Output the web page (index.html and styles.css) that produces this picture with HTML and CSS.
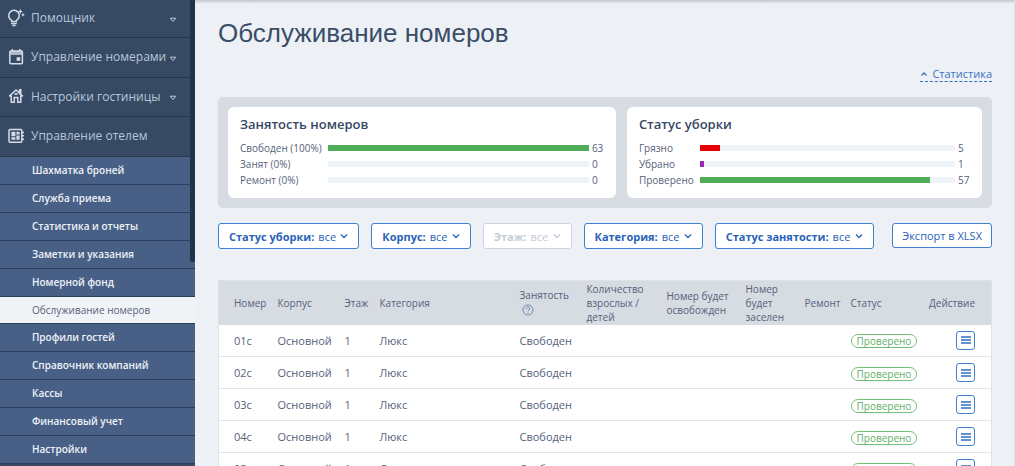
FILE: index.html
```html
<!DOCTYPE html>
<html lang="ru">
<head>
    <meta charset="UTF-8">
    <meta name="viewport" content="width=device-width, initial-scale=1.0">
    <title>Обслуживание номеров</title>
    <link rel="stylesheet" href="styles.css">
</head>
<body>
    <div class="layout">
        <nav class="sidebar">
            <a class="nav-item" href="#">
                <svg class="nav-icon" viewBox="0 0 18 18"><path d="M4.6 11.4a5.3 5.3 0 1 1 4.8 0v1.2H4.6z"/><path d="M4.2 14.4h5.6M5.4 16.6h3.2"/><path class="solid" d="M13.3 0l.8 1.7 1.7.8-1.7.8-.8 1.7-.8-1.7-1.7-.8 1.7-.8zM16 3.8l.6 1.4 1.4.6-1.4.6-.6 1.4-.6-1.4-1.4-.6 1.4-.6z"/></svg>
                <span>Помощник</span>
                <svg class="nav-arrow" viewBox="0 0 8 6"><path d="M1.2 1.2h5.6L4 4.6z"/></svg>
            </a>
            <a class="nav-item" href="#">
                <svg class="nav-icon" viewBox="0 0 18 18"><rect x="2.8" y="3" width="12.6" height="12.8" rx="1"/><path d="M2.8 4h12.6M2.8 6h12.6M5.4 1v2M12.8 1v2"/><path class="solid" d="M9.6 9.2h3.6v3.6H9.6z"/></svg>
                <span>Управление номерами</span>
                <svg class="nav-arrow" viewBox="0 0 8 6"><path d="M1.2 1.2h5.6L4 4.6z"/></svg>
            </a>
            <a class="nav-item" href="#">
                <svg class="nav-icon" viewBox="0 0 18 18"><path d="M2.2 9.4L9 3l6.8 6.4M4.2 8.4v6.8h3V10.4h3.6v4.8h3V8.4M12.6 6V2.8h1.2v4.4"/><path d="M7.8 7.8a1.3 1.3 0 0 1 2.5 0"/></svg>
                <span>Настройки гостиницы</span>
                <svg class="nav-arrow" viewBox="0 0 8 6"><path d="M1.2 1.2h5.6L4 4.6z"/></svg>
            </a>
            <a class="nav-item" href="#">
                <svg class="nav-icon" viewBox="0 0 18 18"><rect x="2" y="2.4" width="12.8" height="12.8" rx="1"/><path d="M14.8 5.4h2.2M14.8 8.8h2.2M14.8 12.2h2.2"/><path class="solid" d="M4.4 4.8h4v4.4h-4zM9.4 4.8h3.2v2.6H9.4zM9.4 8.4h3.2v4.4H9.4zM4.4 10.2h4v2.6h-4z"/></svg>
                <span>Управление отелем</span>
            </a>
            <div class="submenu">
                <a href="#">Шахматка броней</a>
                <a href="#">Служба приема</a>
                <a href="#">Статистика и отчеты</a>
                <a href="#">Заметки и указания</a>
                <a href="#">Номерной фонд</a>
                <a class="active" href="#">Обслуживание номеров</a>
                <a href="#">Профили гостей</a>
                <a href="#">Справочник компаний</a>
                <a href="#">Кассы</a>
                <a href="#">Финансовый учет</a>
                <a href="#">Настройки</a>
            </div>
            <div class="sidebar-scroll"></div>
        </nav>

        <main class="content">
            <h1>Обслуживание номеров</h1>

            <div class="stats-toggle">
                <a href="#"><svg class="chevron" viewBox="0 0 8 8"><path d="M1.5 5.5L4 3l2.5 2.5"/></svg>Статистика</a>
            </div>

            <section class="stats">
                <div class="card">
                    <h2>Занятость номеров</h2>
                    <div class="bars">
                        <span>Свободен (100%)</span><div class="bar"><div class="fill green" style="width: 100%"></div></div><span>63</span>
                        <span>Занят (0%)</span><div class="bar"></div><span>0</span>
                        <span>Ремонт (0%)</span><div class="bar"></div><span>0</span>
                    </div>
                </div>
                <div class="card">
                    <h2>Статус уборки</h2>
                    <div class="bars">
                        <span>Грязно</span><div class="bar"><div class="fill red" style="width: 8%"></div></div><span>5</span>
                        <span>Убрано</span><div class="bar"><div class="fill purple" style="width: 1.6%"></div></div><span>1</span>
                        <span>Проверено</span><div class="bar"><div class="fill green" style="width: 90.4%"></div></div><span>57</span>
                    </div>
                </div>
            </section>

            <div class="filters">
                <label class="filter"><b>Статус уборки:</b><select><option>все</option></select><svg class="chevron" viewBox="0 0 8 8"><path d="M1 2.5l3 3 3-3"/></svg></label>
                <label class="filter"><b>Корпус:</b><select><option>все</option></select><svg class="chevron" viewBox="0 0 8 8"><path d="M1 2.5l3 3 3-3"/></svg></label>
                <label class="filter disabled"><b>Этаж:</b><select disabled><option>все</option></select><svg class="chevron" viewBox="0 0 8 8"><path d="M1 2.5l3 3 3-3"/></svg></label>
                <label class="filter"><b>Категория:</b><select><option>все</option></select><svg class="chevron" viewBox="0 0 8 8"><path d="M1 2.5l3 3 3-3"/></svg></label>
                <label class="filter"><b>Статус занятости:</b><select><option>все</option></select><svg class="chevron" viewBox="0 0 8 8"><path d="M1 2.5l3 3 3-3"/></svg></label>
                <button class="export" type="button">Экспорт в XLSX</button>
            </div>

            <table class="rooms">
                <colgroup>
                    <col class="c-room"><col class="c-building"><col class="c-floor"><col class="c-category"><col class="c-busy"><col class="c-guests"><col class="c-free"><col class="c-checkin"><col class="c-repair"><col class="c-status"><col class="c-action">
                </colgroup>
                <thead>
                    <tr>
                        <th>Номер</th>
                        <th>Корпус</th>
                        <th>Этаж</th>
                        <th>Категория</th>
                        <th>Занятость <svg class="help" viewBox="0 0 12 12"><circle cx="6" cy="6" r="5"/><path d="M4.3 4.8a1.7 1.7 0 1 1 2.5 1.4c-.6.3-.8.6-.8 1.2M6 8.4v1"/></svg></th>
                        <th>Количество взрослых / детей</th>
                        <th>Номер будет освобожден</th>
                        <th>Номер будет заселен</th>
                        <th>Ремонт</th>
                        <th>Статус</th>
                        <th>Действие</th>
                    </tr>
                </thead>
                <tbody>
                    <tr>
                        <td>01с</td><td>Основной</td><td>1</td><td>Люкс</td><td>Свободен</td><td></td><td></td><td></td><td></td>
                        <td><span class="badge">Проверено</span></td>
                        <td><button class="menu-btn" type="button" aria-label="Меню"><svg viewBox="0 0 10 8"><path d="M0 1h10M0 4h10M0 7h10"/></svg></button></td>
                    </tr>
                    <tr>
                        <td>02с</td><td>Основной</td><td>1</td><td>Люкс</td><td>Свободен</td><td></td><td></td><td></td><td></td>
                        <td><span class="badge">Проверено</span></td>
                        <td><button class="menu-btn" type="button" aria-label="Меню"><svg viewBox="0 0 10 8"><path d="M0 1h10M0 4h10M0 7h10"/></svg></button></td>
                    </tr>
                    <tr>
                        <td>03с</td><td>Основной</td><td>1</td><td>Люкс</td><td>Свободен</td><td></td><td></td><td></td><td></td>
                        <td><span class="badge">Проверено</span></td>
                        <td><button class="menu-btn" type="button" aria-label="Меню"><svg viewBox="0 0 10 8"><path d="M0 1h10M0 4h10M0 7h10"/></svg></button></td>
                    </tr>
                    <tr>
                        <td>04с</td><td>Основной</td><td>1</td><td>Люкс</td><td>Свободен</td><td></td><td></td><td></td><td></td>
                        <td><span class="badge">Проверено</span></td>
                        <td><button class="menu-btn" type="button" aria-label="Меню"><svg viewBox="0 0 10 8"><path d="M0 1h10M0 4h10M0 7h10"/></svg></button></td>
                    </tr>
                    <tr>
                        <td>05с</td><td>Основной</td><td>1</td><td>Люкс</td><td>Свободен</td><td></td><td></td><td></td><td></td>
                        <td><span class="badge">Проверено</span></td>
                        <td><button class="menu-btn" type="button" aria-label="Меню"><svg viewBox="0 0 10 8"><path d="M0 1h10M0 4h10M0 7h10"/></svg></button></td>
                    </tr>
                </tbody>
            </table>
        </main>
    </div>
</body>
</html>
```

FILE: styles.css
```css
* {
    box-sizing: border-box;
}

body {
    margin: 0;
    font-family: "Open Sans", "Noto Sans", sans-serif;
    font-size: 10px;
    color: #56627a;
    background-color: #edf1f5;
}

a {
    text-decoration: none;
}

svg {
    fill: none;
    stroke: currentColor;
    flex: none;
}

svg .solid {
    fill: currentColor;
    stroke: none;
}

.layout {
    display: flex;
    height: 100vh;
    overflow: hidden;
}

/* Sidebar */
.sidebar {
    position: relative;
    flex: none;
    width: 195px;
    background-color: #364a63;
    overflow: hidden;
}

.nav-item {
    display: flex;
    align-items: center;
    height: 40px;
    padding: 0 18px 2px 7px;
    border-bottom: 1px solid #26374d;
    font-size: 12px;
    font-weight: 500;
    color: #b9c6da;
    white-space: nowrap;
}

.nav-item:first-child {
    height: 38px;
}

.nav-item:nth-child(3) {
    height: 39px;
}

.nav-icon {
    width: 18px;
    height: 18px;
    margin-right: 6px;
    stroke-width: 1.5;
    color: #d3dceb;
}

.nav-arrow {
    width: 8px;
    height: 6px;
    margin-left: auto;
    margin-top: 4px;
}

.submenu a {
    display: flex;
    align-items: center;
    height: 28px;
    padding: 0 0 2px 32px;
    border-bottom: 1px solid #2b3f5b;
    background-color: #486086;
    font-weight: 600;
    color: #eef2f8;
}

.submenu a.active {
    height: 27px;
    padding-bottom: 0;
    background-color: #f1f4f7;
    font-weight: 400;
    color: #56627a;
}

.sidebar-scroll {
    position: absolute;
    top: 0;
    right: 0;
    width: 5px;
    height: 262px;
    border-radius: 0 0 3px 3px;
    background-color: #223248;
}

/* Content */
.content {
    flex: 1;
    min-width: 0;
    padding: 15px 22px 0 23px;
    border-right: 1px solid #dde2e9;
    background: linear-gradient(#c3c8cd, #edf1f5 4px) no-repeat;
}

h1 {
    margin: 0;
    font-family: "Liberation Sans", Arial, sans-serif;
    font-size: 26px;
    font-weight: 400;
    line-height: 36px;
    color: #3a4d69;
}

.stats-toggle {
    display: flex;
    justify-content: flex-end;
    margin: 15px 0;
}

.stats-toggle a {
    display: flex;
    align-items: center;
    gap: 4px;
    border-bottom: 1px dashed #2f6fc4;
    font-size: 11px;
    line-height: 15px;
    color: #3c72c4;
}

.chevron {
    width: 8px;
    height: 8px;
    stroke-width: 1.3;
}

.stats {
    display: flex;
    gap: 11px;
    padding: 10px;
    border-radius: 5px;
    background-color: #d7dbe2;
}

.card {
    flex: 389;
    min-width: 0;
    padding: 8px 12px 10px;
    border-radius: 6px;
    background-color: #fff;
}

.card:last-child {
    flex: 354;
}

h2 {
    margin: 0 0 7px;
    font-size: 13px;
    font-weight: 600;
    line-height: 18px;
    color: #364863;
}

.bars {
    display: grid;
    grid-template-columns: auto 1fr 12px;
    column-gap: 3px;
    align-items: center;
    line-height: 16px;
}

.bar {
    height: 6px;
    margin-left: 3px;
    background-color: #eef3f7;
}

.fill {
    height: 100%;
}

.green {
    background-color: #4fac57;
}

.red {
    background-color: #e60000;
}

.purple {
    background-color: #9c27b0;
}

/* Filters */
.filters {
    display: flex;
    align-items: flex-start;
    gap: 12px;
    margin: 15px 0 31px;
}

.filter,
.export {
    display: flex;
    align-items: center;
    height: 26px;
    padding: 0 10px;
    border: 1px solid #3f80d0;
    border-radius: 3px;
    background-color: #fff;
    font-size: 11px;
    color: #2a62b8;
    white-space: nowrap;
}

.filter select {
    appearance: none;
    margin: 0 4px;
    padding: 0;
    border: 0;
    background: none;
    font: inherit;
    color: inherit;
    opacity: 1;
}

.filter.disabled {
    border-color: #cdd4e0;
    color: #c3cad8;
}

.export {
    height: 25px;
    padding: 0 9px;
    margin-left: auto;
    font-family: inherit;
    cursor: pointer;
}

/* Rooms table */
.rooms {
    width: 100%;
    table-layout: fixed;
    border-collapse: collapse;
    border: 1px solid #dde1e8;
    background-color: #fff;
    font-size: 11px;
}

.c-room { width: 53px; }
.c-building { width: 67px; }
.c-floor { width: 35px; }
.c-busy { width: 67px; }
.c-guests { width: 80px; }
.c-free { width: 79px; }
.c-checkin { width: 59px; }
.c-repair { width: 46px; }
.c-status { width: 75px; }
.c-action { width: 72px; }

th,
td {
    padding: 0 6px;
    text-align: left;
}

th {
    height: 44px;
    background-color: #d7dbe2;
    font-size: 10px;
    font-weight: 400;
    line-height: 14px;
}

td {
    height: 32px;
    border-bottom: 1px solid #dfe3ea;
}

th:first-child,
td:first-child {
    padding-left: 15px;
}

th:last-child,
td:last-child {
    padding-right: 16px;
    text-align: right;
}

.help {
    display: block;
    width: 12px;
    height: 12px;
    margin: 2px;
    color: #7389b3;
}

.badge {
    display: inline-block;
    padding: 0 5px;
    border: 1px solid #72bf78;
    border-radius: 8px;
    font-size: 10px;
    line-height: 12px;
    color: #62b068;
    vertical-align: middle;
}

.menu-btn {
    display: inline-flex;
    align-items: center;
    justify-content: center;
    width: 19px;
    height: 19px;
    padding: 0;
    border: 1px solid #3f80d0;
    border-radius: 3px;
    background-color: #fff;
    color: #2f6fc4;
    vertical-align: middle;
    cursor: pointer;
}

.menu-btn svg {
    width: 10px;
    height: 8px;
    stroke-width: 1.4;
}
```
